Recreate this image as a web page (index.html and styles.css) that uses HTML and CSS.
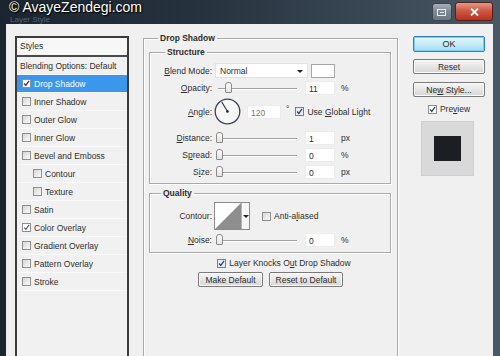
FILE: index.html
```html
<!DOCTYPE html>
<html lang="en">
<head>
    <meta charset="UTF-8">
    <meta name="viewport" content="width=device-width, initial-scale=1.0">
    <title>Layer Style</title>
    <link rel="stylesheet" href="styles.css">
</head>
<body>
    <div class="window">
        <div class="titlebar">
            <span class="title">Layer Style</span>
            <span class="watermark">© AvayeZendegi.com</span>
            <div class="caption">
                <span class="cap-btn">
                    <svg width="10" height="9" viewBox="0 0 10 9"><rect x="0.5" y="1.5" width="8" height="6" fill="none" stroke="#e8ecef" stroke-width="1"/><path d="M3 4.5h4" stroke="#e8ecef"/></svg>
                </span>
                <span class="cap-btn close">
                    <svg width="9" height="8" viewBox="0 0 9 8"><path d="M1 0.5L8 7.5M8 0.5L1 7.5" stroke="#fff" stroke-width="1.8"/></svg>
                </span>
            </div>
        </div>

        <div class="dialog">
            <div class="style-list">
                <div class="list-head">Styles</div>
                <div class="list-item">Blending Options: Default</div>
                <div class="list-item selected"><span class="check on"><svg width="7" height="7" viewBox="0 0 9 9"><path d="M1.5 4.5L3.6 7L7.8 1.2" fill="none" stroke="#253a78" stroke-width="1.6"/></svg></span>Drop Shadow</div>
                <div class="list-item"><span class="check"></span>Inner Shadow</div>
                <div class="list-item"><span class="check"></span>Outer Glow</div>
                <div class="list-item"><span class="check"></span>Inner Glow</div>
                <div class="list-item"><span class="check"></span>Bevel and Emboss</div>
                <div class="list-item sub-item"><span class="check"></span>Contour</div>
                <div class="list-item sub-item"><span class="check"></span>Texture</div>
                <div class="list-item"><span class="check"></span>Satin</div>
                <div class="list-item"><span class="check on"><svg width="7" height="7" viewBox="0 0 9 9"><path d="M1.5 4.5L3.6 7L7.8 1.2" fill="none" stroke="#3a4a70" stroke-width="1.4"/></svg></span>Color Overlay</div>
                <div class="list-item"><span class="check"></span>Gradient Overlay</div>
                <div class="list-item"><span class="check"></span>Pattern Overlay</div>
                <div class="list-item"><span class="check"></span>Stroke</div>
            </div>

            <fieldset class="group main">
                <legend>Drop Shadow</legend>

                <fieldset class="group sub structure">
                    <legend>Structure</legend>
                    <div class="row row-blend">
                        <span class="label"><u>B</u>lend Mode:</span>
                        <div class="select">Normal<span class="arrow"></span></div>
                        <span class="swatch"></span>
                    </div>
                    <div class="row">
                        <span class="label"><u>O</u>pacity:</span>
                        <div class="slider"><span class="track"></span><span class="thumb" style="left: 10px"></span></div>
                        <span class="field">11</span>
                        <span class="unit">%</span>
                    </div>
                    <div class="row row-angle">
                        <span class="label"><u>A</u>ngle:</span>
                        <svg class="dial" width="27" height="27" viewBox="0 0 27 27">
                            <circle cx="13.5" cy="13.5" r="12.3" fill="#f6f6f6" stroke="#3a4252" stroke-width="1.3"/>
                            <path d="M13.5 13.5L7.8 4" stroke="#2a2f3a" stroke-width="1.1"/>
                            <circle cx="13.5" cy="13.5" r="1.3" fill="#222"/>
                        </svg>
                        <span class="field angle-field">120</span>
                        <span class="degree">°</span>
                        <span class="check on blue"><svg width="7" height="7" viewBox="0 0 9 9"><path d="M1.5 4.5L3.6 7L7.8 1.2" fill="none" stroke="#253a78" stroke-width="1.5"/></svg></span>
                        <span class="check-text">Use <u>G</u>lobal Light</span>
                    </div>
                    <div class="row row-gap">
                        <span class="label"><u>D</u>istance:</span>
                        <div class="slider"><span class="track"></span><span class="thumb" style="left: 1px"></span></div>
                        <span class="field">1</span>
                        <span class="unit">px</span>
                    </div>
                    <div class="row">
                        <span class="label">S<u>p</u>read:</span>
                        <div class="slider"><span class="track"></span><span class="thumb" style="left: 1px"></span></div>
                        <span class="field">0</span>
                        <span class="unit">%</span>
                    </div>
                    <div class="row">
                        <span class="label">S<u>i</u>ze:</span>
                        <div class="slider"><span class="track"></span><span class="thumb" style="left: 1px"></span></div>
                        <span class="field">0</span>
                        <span class="unit">px</span>
                    </div>
                </fieldset>

                <fieldset class="group sub quality">
                    <legend>Quality</legend>
                    <div class="row row-contour">
                        <span class="label">Contour:</span>
                        <div class="contour">
                            <svg width="26" height="26" viewBox="0 0 26 26"><rect width="26" height="26" fill="#fff"/><path d="M0 26L26 0V26Z" fill="#8e8e8e"/></svg>
                            <span class="contour-arrow"><span class="arrow"></span></span>
                        </div>
                        <span class="check anti"></span>
                        <span class="check-text">Anti-a<u>l</u>iased</span>
                    </div>
                    <div class="row">
                        <span class="label"><u>N</u>oise:</span>
                        <div class="slider"><span class="track"></span><span class="thumb" style="left: 1px"></span></div>
                        <span class="field">0</span>
                        <span class="unit">%</span>
                    </div>
                </fieldset>

                <div class="knock">
                    <span class="check on blue"><svg width="7" height="7" viewBox="0 0 9 9"><path d="M1.5 4.5L3.6 7L7.8 1.2" fill="none" stroke="#253a78" stroke-width="1.5"/></svg></span>
                    <span class="check-text">Layer Knocks O<u>u</u>t Drop Shadow</span>
                </div>
                <div class="defaults">
                    <button class="btn make">Make Default</button>
                    <button class="btn reset-default">Reset to Default</button>
                </div>
            </fieldset>

            <div class="actions">
                <button class="btn ok">OK</button>
                <button class="btn">Reset</button>
                <button class="btn new-style">Ne<u>w</u> Style...</button>
                <div class="preview">
                    <span class="check on"><svg width="7" height="7" viewBox="0 0 9 9"><path d="M1.5 4.5L3.6 7L7.8 1.2" fill="none" stroke="#253a78" stroke-width="1.5"/></svg></span>
                    <span class="check-text">Pre<u>v</u>iew</span>
                </div>
                <div class="thumbnail"><span class="swatch-dark"></span></div>
            </div>
        </div>
    </div>
</body>
</html>
```

FILE: styles.css
```css
body {
    margin: 0;
    padding: 0;
    font-family: "Liberation Sans", Arial, sans-serif;
    font-size: 8.5px;
    color: #2e2e2e;
    background: #1c2630;
}
.window {
    width: 500px;
    height: 356px;
    overflow: hidden;
    background: linear-gradient(to right, #1b2530, #26323e 40%, #3a4855 75%, #4a5764);
}
.titlebar {
    position: relative;
    height: 24px;
    display: flex;
    justify-content: space-between;
    align-items: flex-start;
    padding: 2px 7px 0 10px;
    box-sizing: border-box;
}
.title {
    margin-top: 13px;
    font-size: 8px;
    line-height: 9px;
    color: #56616e;
}
.watermark {
    position: absolute;
    left: 9px;
    top: 0;
    font-size: 14px;
    line-height: 14px;
    color: #fff;
    text-shadow: 0 0 2px #000, 1px 1px 1px #000;
}
.caption {
    display: flex;
    gap: 3px;
}
.cap-btn {
    width: 20px;
    height: 18px;
    margin-top: 1px;
    display: flex;
    align-items: center;
    justify-content: center;
    border: 1px solid #3a4550;
    border-radius: 3px;
    box-sizing: border-box;
    background: linear-gradient(#a6aeb6, #7d8791 50%, #6d7781);
}
.cap-btn.close {
    width: 38px;
    height: 19px;
    margin-top: 0;
    border-color: #5a1e18;
    background: linear-gradient(#e29a88, #cf5a45 45%, #b8321f);
}

.dialog {
    margin: 0 7px 0 6px;
    height: 332px;
    background: #f0f0f0;
    display: flex;
    padding: 9px 8px 0 9px;
    box-sizing: border-box;
}

.style-list {
    width: 114px;
    height: 340px;
    margin-top: 3px;
    flex-shrink: 0;
    border: 2px solid #3c3c3c;
    box-sizing: border-box;
    background: #f1f1f1;
}
.list-head {
    height: 17px;
    line-height: 17px;
    padding-left: 3px;
    border-bottom: 2px solid #4a4a4a;
    background: #f7f7f7;
}
.list-item {
    height: 18px;
    display: flex;
    align-items: center;
    padding-left: 3px;
    box-sizing: border-box;
    border-bottom: 1px solid #f9f9f9;
    white-space: nowrap;
}
.list-item .check {
    margin-left: 2px;
    margin-right: 3px;
}
.list-item.sub-item {
    padding-left: 14px;
}
.list-item.selected {
    background: #3a97ec;
    color: #fff;
}
.check {
    width: 9px;
    height: 9px;
    flex-shrink: 0;
    display: inline-flex;
    align-items: center;
    justify-content: center;
    border: 1px solid #8f8f8f;
    box-sizing: border-box;
    background: linear-gradient(135deg, #d6d6d6, #fbfbfb);
}
.check.on {
    background: #fff;
}
.check.blue {
    border-color: #6b7fa8;
    background: #e6ecf6;
}

.group {
    margin: 0;
    padding: 0;
    min-width: 0;
    border: 1px solid #aaa;
    box-shadow: inset 1px 1px 0 #fff, 1px 1px 0 #fff;
}
.group legend {
    padding: 0 2px;
    line-height: 10px;
    font-weight: bold;
    color: #2b2b2b;
}
.group.main {
    width: 255px;
    height: 360px;
    margin-left: 14px;
    flex-shrink: 0;
    box-sizing: border-box;
}
.group.main > legend {
    margin-left: 14px;
}
.group.sub {
    margin: 4px 6px 0 5px;
}
.structure > legend {
    margin-left: 15px;
}
.quality > legend {
    margin-left: 11px;
}
.structure {
    padding-bottom: 4px;
}
.quality {
    padding-bottom: 5px;
}

.row {
    display: flex;
    align-items: center;
    height: 14px;
    margin-top: 3px;
    white-space: nowrap;
}
.row-blend {
    height: 15px;
    margin-top: 6px;
}
.row-angle {
    height: 27px;
}
.row-gap {
    margin-top: 6px;
}
.row-contour {
    height: 28px;
    margin-top: 4px;
}
.label {
    width: 62px;
    margin-right: 3px;
    flex-shrink: 0;
    text-align: right;
}
.select {
    position: relative;
    width: 93px;
    height: 15px;
    line-height: 15px;
    padding-left: 4px;
    box-sizing: border-box;
    background: #fff;
    border: 1px solid #e2e2e2;
}
.select .arrow {
    position: absolute;
    right: 4px;
    top: 6px;
}
.arrow {
    display: block;
    width: 0;
    height: 0;
    border-left: 3px solid transparent;
    border-right: 3px solid transparent;
    border-top: 3px solid #222;
}
.swatch {
    width: 24px;
    height: 14px;
    margin-left: 3px;
    box-sizing: border-box;
    background: #fff;
    border: 1px solid #a6a6a6;
}
.slider {
    position: relative;
    width: 85px;
    height: 14px;
    flex-shrink: 0;
}
.slider .track {
    position: absolute;
    left: 3px;
    right: 3px;
    top: 7px;
    height: 1px;
    background: #a2a2a2;
    box-shadow: 0 1px 0 #fff;
}
.slider .thumb {
    position: absolute;
    top: 1px;
    width: 7px;
    height: 11px;
    box-sizing: border-box;
    border: 1px solid #8a8a8a;
    border-radius: 3px 3px 1px 1px;
    background: linear-gradient(#fdfdfd, #e2e2e2);
}
.field {
    width: 30px;
    height: 14px;
    line-height: 14px;
    margin-left: 5px;
    padding-left: 3px;
    box-sizing: border-box;
    background: #fff;
    border: 1px solid #ececec;
}
.unit {
    margin-left: 6px;
}
.dial {
    margin-left: -1px;
    flex-shrink: 0;
}
.angle-field {
    width: 34px;
    margin-left: 6px;
    color: #777;
}
.degree {
    margin: 0 6px 0 5px;
    align-self: flex-start;
    margin-top: 6px;
}
.check-text {
    margin-left: 3px;
}
.contour {
    display: flex;
    height: 28px;
    border: 1px solid #8a8a8a;
    box-sizing: border-box;
    margin-left: -1px;
}
.contour svg {
    display: block;
}
.contour-arrow {
    width: 7px;
    display: flex;
    align-items: center;
    justify-content: center;
    border-left: 1px solid #b5b5b5;
    background: #f7f7f7;
}
.check.anti {
    margin-left: 12px;
}

.knock {
    display: flex;
    align-items: center;
    justify-content: center;
    height: 14px;
    margin-top: 3px;
    padding-left: 27px;
    white-space: nowrap;
}
.defaults {
    display: flex;
    justify-content: center;
    gap: 6px;
    margin-top: 2px;
}
.btn {
    height: 15px;
    padding: 0;
    font-family: "Liberation Sans", Arial, sans-serif;
    font-size: 8.5px;
    color: #2a2a2a;
    border: 1px solid #7a7a7a;
    border-radius: 2px;
    background: linear-gradient(#f6f6f6, #e6e6e6 50%, #d6d6d6);
    box-shadow: inset 0 0 0 1px #fbfbfb;
}
.btn.make {
    width: 65px;
}
.btn.reset-default {
    width: 74px;
}

.actions {
    width: 72px;
    margin-left: 15px;
    margin-top: 3px;
    flex-shrink: 0;
    display: flex;
    flex-direction: column;
}
.actions .btn {
    width: 72px;
    margin-top: 7px;
}
.actions .btn.ok {
    height: 16px;
    margin-top: 0;
    font-size: 9px;
    border-color: #2d7fb8;
    background: linear-gradient(#e8f7fd, #c6ecfa 50%, #9fdcf4);
    box-shadow: inset 0 0 0 1px #7fd0f0;
}
.actions .btn.new-style {
    margin-top: 8px;
}
.preview {
    display: flex;
    align-items: center;
    justify-content: center;
    height: 12px;
    margin-top: 6px;
}
.thumbnail {
    width: 53px;
    height: 55px;
    margin: 6px 0 0 8px;
    box-sizing: border-box;
    display: flex;
    align-items: center;
    justify-content: center;
    background: #d9d9d9;
    border: 1px solid #cfcfcf;
}
.swatch-dark {
    width: 27px;
    height: 25px;
    background: #1b1e23;
}
```
